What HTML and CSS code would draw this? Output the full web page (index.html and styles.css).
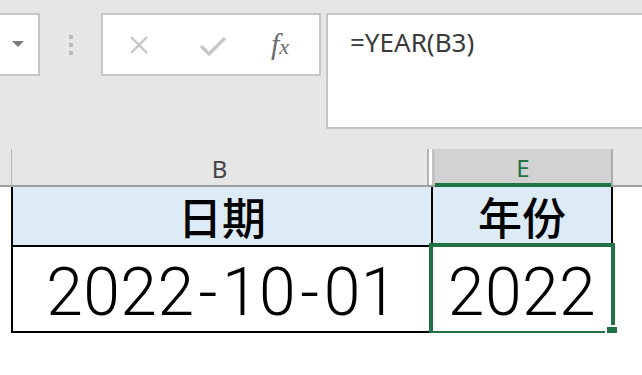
FILE: index.html
```html
<!DOCTYPE html>
<html lang="zh-CN">
<head>
    <meta charset="UTF-8">
    <meta name="viewport" content="width=device-width, initial-scale=1.0">
    <title>YEAR</title>
    <link rel="stylesheet" href="styles.css">
</head>
<body>
    <div class="ribbon">
        <div class="name-box"><span class="caret"></span></div>
        <div class="grip"><i></i><i></i><i></i></div>
        <div class="fx-buttons">
            <svg class="icon-cancel" width="24" height="24" viewBox="0 0 24 24">
                <path d="M4 4 L20 20 M20 4 L4 20" stroke="#c6c6c6" stroke-width="2.4" fill="none"/>
            </svg>
            <svg class="icon-enter" width="28" height="24" viewBox="0 0 28 24">
                <path d="M2 12 L10 20 L26 4" stroke="#c6c6c6" stroke-width="3.2" fill="none"/>
            </svg>
            <span class="fx">f<span class="fx-x">x</span></span>
        </div>
        <div class="formula">=YEAR(B3)</div>
    </div>

    <div class="col-headers">
        <div class="corner"></div>
        <div class="col col-b">B</div>
        <div class="hidden-sep"></div>
        <div class="col col-e">E</div>
        <div class="col-rest"></div>
    </div>

    <div class="sheet">
        <div class="cells">
            <div class="cell head">日期</div>
            <div class="cell head">年份</div>
            <div class="cell value">2022<span class="dash">-</span>10<span class="dash">-</span>01</div>
            <div class="cell value">2022</div>
        </div>
        <div class="selection"></div>
        <div class="fill-handle"></div>
    </div>
</body>
</html>
```

FILE: styles.css
```css
body {
    margin: 0;
    padding: 0;
    background-color: #fff;
    font-family: "Noto Sans", "Noto Sans CJK SC", sans-serif;
    overflow: hidden;
}
.ribbon {
    height: 149px;
    background-color: #e6e6e6;
    display: flex;
    align-items: flex-start;
    padding-top: 13px;
    box-sizing: border-box;
}
.name-box {
    width: 40px;
    height: 63px;
    box-sizing: border-box;
    background-color: #fff;
    border: 2px solid #c6c6c6;
    border-left: none;
    display: flex;
    align-items: center;
    padding-left: 12px;
}
.caret {
    width: 0;
    height: 0;
    border-left: 6px solid transparent;
    border-right: 6px solid transparent;
    border-top: 6px solid #7a7a7a;
    margin-top: -2px;
}
.grip {
    margin-left: 29px;
    margin-top: 22px;
    display: flex;
    flex-direction: column;
    gap: 4px;
}
.grip i {
    display: block;
    width: 4px;
    height: 4px;
    background-color: #b9b9b9;
}
.fx-buttons {
    margin-left: 28px;
    width: 220px;
    height: 63px;
    box-sizing: border-box;
    background-color: #fff;
    border: 2px solid #c6c6c6;
    display: flex;
    align-items: center;
    padding-left: 24px;
}
.icon-cancel {
    margin-top: 1px;
}
.icon-enter {
    margin-left: 48px;
    margin-top: 3px;
}
.fx {
    margin-left: 44px;
    font-family: "Liberation Serif", serif;
    font-style: italic;
    font-size: 30px;
    color: #6d6d6d;
    margin-top: -2px;
}
.fx-x {
    font-size: 22px;
}
.formula {
    margin-left: 5px;
    flex: 1;
    height: 116px;
    box-sizing: border-box;
    background-color: #fff;
    border: 2px solid #c6c6c6;
    border-right: none;
    padding: 12px 0 0 22px;
    font-size: 26px;
    color: #3a3a3a;
    line-height: 30px;
}
.col-headers {
    display: flex;
    height: 38px;
    background-color: #e6e6e6;
    border-bottom: 2px solid #9e9e9e;
    box-sizing: border-box;
}
.corner {
    width: 11px;
    border-right: 1px solid #b5b5b5;
}
.col {
    display: flex;
    align-items: center;
    justify-content: center;
    font-size: 24px;
    color: #444;
    padding-top: 2px;
    box-sizing: border-box;
}
.col-b {
    width: 415px;
}
.hidden-sep {
    width: 8px;
    box-sizing: border-box;
    border-left: 2px solid #b3b3b3;
    border-right: 3px solid #c4c4c4;
    background-color: #fff;
}
.col-e {
    width: 176px;
    background-color: #d2d2d2;
    color: #217346;
    border-bottom: 4px solid #217346;
    margin-bottom: -2px;
    height: 38px;
}
.col-rest {
    flex: 1;
    border-left: 2px solid #ababab;
}
.sheet {
    position: relative;
}
.cells {
    margin-left: 11px;
    width: 602px;
    display: grid;
    grid-template-columns: 418px 178px;
    grid-template-rows: 58px 84px;
    gap: 2px;
    padding: 0 2px 2px 2px;
    background-color: #000;
    box-sizing: border-box;
}
.cell {
    display: flex;
    align-items: center;
    justify-content: center;
    color: #000;
}
.head {
    background-color: #ddebf7;
    font-family: "Noto Sans CJK SC", sans-serif;
    font-size: 44px;
    font-weight: 500;
}
.value {
    background-color: #fff;
    font-family: Roboto, "Noto Sans CJK SC", sans-serif;
    font-weight: 300;
    font-size: 66px;
    letter-spacing: 0.5px;
    padding-top: 6px;
}
.dash {
    margin: 0 4px;
}
.selection {
    position: absolute;
    left: 429px;
    top: 56px;
    width: 186px;
    height: 92px;
    box-sizing: border-box;
    border: 4px solid #217346;
}
.fill-handle {
    position: absolute;
    left: 605px;
    top: 138px;
    width: 10px;
    height: 10px;
    background-color: #217346;
    border: 2px solid #fff;
}
```
